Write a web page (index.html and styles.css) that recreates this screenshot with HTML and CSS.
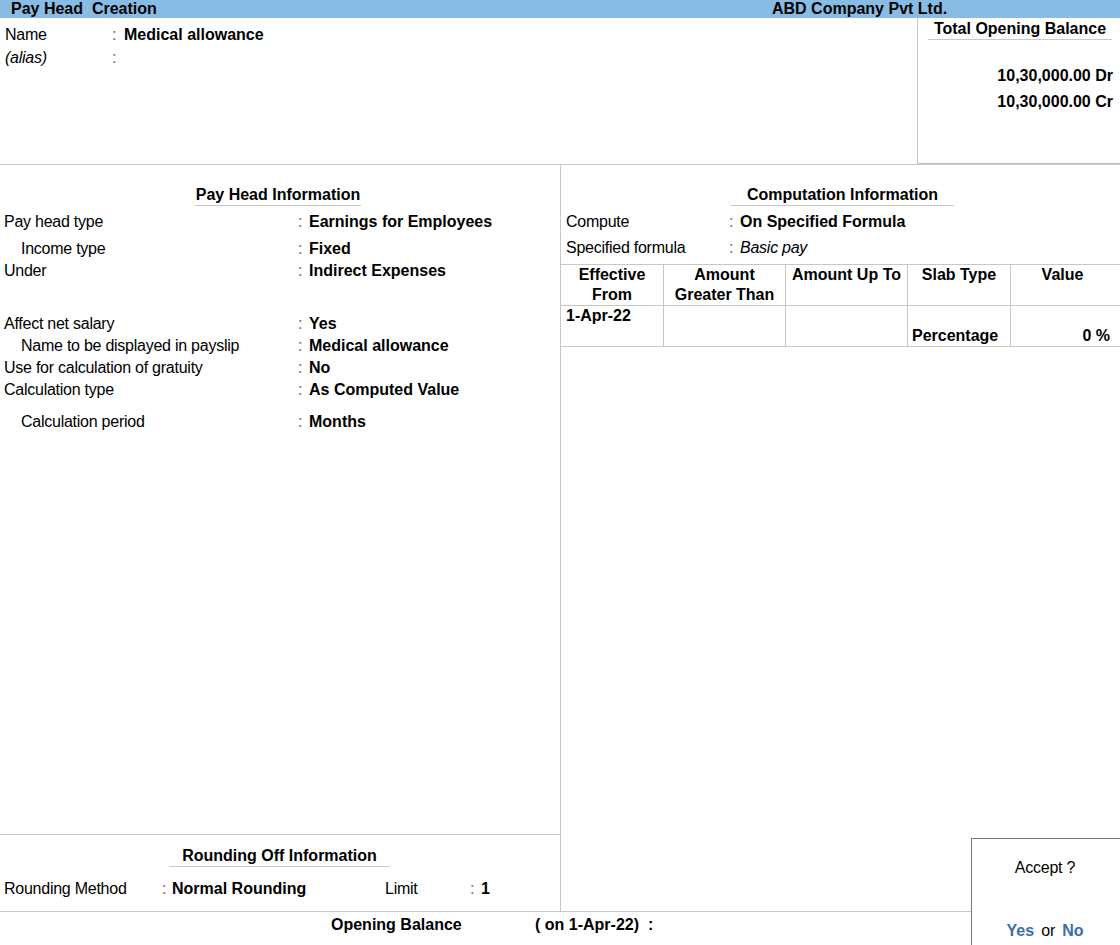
FILE: index.html
```html
<!DOCTYPE html>
<html>
<head>
<meta charset="utf-8">
<title>Pay Head Creation</title>
<link rel="stylesheet" href="styles.css">
</head>
<body>
<div class="titlebar">
  <div class="app">Pay Head&nbsp; Creation</div>
  <div class="company">ABD Company Pvt Ltd.</div>
</div>

<div class="top">
  <div class="top-left">
    <div class="field f-name"><span class="lbl">Name</span><span class="colon">:</span><span class="val">Medical allowance</span></div>
    <div class="field f-name alias"><span class="lbl"><i>(alias)</i></span><span class="colon">:</span><span class="val"></span></div>
  </div>
  <div class="balance-box">
    <div class="bal-title"><span>Total Opening Balance</span></div>
    <div class="bal-amt dr">10,30,000.00 Dr</div>
    <div class="bal-amt">10,30,000.00 Cr</div>
  </div>
</div>

<div class="main">
  <div class="left">
    <div class="info">
      <div class="sec-title"><span class="ul-payhead">Pay Head Information</span></div>
      <div class="field f-info first"><span class="lbl">Pay head type</span><span class="colon">:</span><span class="val">Earnings for Employees</span></div>
      <div class="field f-info indent gap5"><span class="lbl">Income type</span><span class="colon">:</span><span class="val">Fixed</span></div>
      <div class="field f-info"><span class="lbl">Under</span><span class="colon">:</span><span class="val">Indirect Expenses</span></div>
      <div class="field f-info gap31"><span class="lbl">Affect net salary</span><span class="colon">:</span><span class="val">Yes</span></div>
      <div class="field f-info indent"><span class="lbl">Name to be displayed in payslip</span><span class="colon">:</span><span class="val">Medical allowance</span></div>
      <div class="field f-info"><span class="lbl">Use for calculation of gratuity</span><span class="colon">:</span><span class="val">No</span></div>
      <div class="field f-info"><span class="lbl">Calculation type</span><span class="colon">:</span><span class="val">As Computed Value</span></div>
      <div class="field f-info indent gap10"><span class="lbl">Calculation period</span><span class="colon">:</span><span class="val">Months</span></div>
    </div>
    <div class="rounding">
      <div class="sec-title small"><span class="ul-round">Rounding Off Information</span></div>
      <div class="field f-round"><span class="lbl">Rounding Method</span><span class="colon">:</span><span class="val rm">Normal Rounding</span><span class="lbl2">Limit</span><span class="colon">:</span><span class="val">1</span></div>
    </div>
  </div>
  <div class="right">
    <div class="sec-title"><span class="ul-comp">Computation Information</span></div>
    <div class="field f-comp first"><span class="lbl">Compute</span><span class="colon">:</span><span class="val">On Specified Formula</span></div>
    <div class="field f-comp gap4"><span class="lbl">Specified formula</span><span class="colon">:</span><span class="val it">Basic pay</span></div>
    <div class="slab">
      <div class="th">Effective<br>From</div>
      <div class="th">Amount<br>Greater Than</div>
      <div class="th">Amount Up To</div>
      <div class="th">Slab Type</div>
      <div class="th last">Value</div>
      <div class="td date">1-Apr-22</div>
      <div class="td"></div>
      <div class="td"></div>
      <div class="td low">Percentage</div>
      <div class="td low num">0 %</div>
    </div>
  </div>
</div>

<div class="footer">
  <span class="ob">Opening Balance</span><span class="ob-date">( on 1-Apr-22)&nbsp; :</span>
</div>

<div class="accept">
  <div class="accept-q">Accept ?</div>
  <div class="accept-a"><span class="opt">Yes</span> or <span class="opt">No</span></div>
</div>
</body>
</html>
```

FILE: styles.css
```css
html, body {
  margin: 0;
  padding: 0;
}
body {
  width: 1120px;
  height: 945px;
  overflow: hidden;
  position: relative;
  background: #ffffff;
  color: #000000;
  font-family: "Liberation Sans", Arial, sans-serif;
  font-size: 16px;
  letter-spacing: -0.25px;
}

/* title bar */
.titlebar {
  height: 18px;
  line-height: 18px;
  background: #88bce4;
  display: flex;
  font-weight: bold;
  letter-spacing: 0;
}
.titlebar .app {
  width: 761px;
  padding-left: 11px;
}

/* top area */
.top {
  display: flex;
  height: 146px;
  border-bottom: 1px solid #c8c8c8;
}
.top-left {
  flex: 1;
  padding-top: 6px;
}
.balance-box {
  width: 203px;
  height: 146px;
  box-sizing: border-box;
  border-left: 1px solid #c8c8c8;
  border-bottom: 1px solid #bdbdbd;
}
.bal-title {
  text-align: center;
  font-weight: bold;
  letter-spacing: 0;
  line-height: 20px;
  padding-top: 1px;
  padding-left: 2px;
}
.bal-title span {
  display: inline-block;
  padding: 0 6px;
  border-bottom: 1px solid #c8c8c8;
}
.bal-amt {
  text-align: right;
  font-weight: bold;
  letter-spacing: 0;
  line-height: 22px;
  padding-right: 7px;
  margin-top: 4px;
}
.bal-amt.dr {
  margin-top: 25px;
}

/* generic field rows */
.field {
  display: flex;
  height: 22px;
  line-height: 22px;
  white-space: nowrap;
}
.field .colon {
  color: #666;
}
.field .val {
  font-weight: bold;
  letter-spacing: 0;
}
.field .val.it {
  font-weight: normal;
  font-style: italic;
  letter-spacing: -0.25px;
}

.f-name {
  padding-left: 5px;
}
.f-name .lbl { width: 107px; }
.f-name .colon { width: 12px; }
.f-name.alias { margin-top: 1px; }

/* main area */
.main {
  display: flex;
  height: 746px;
  border-bottom: 1px solid #c8c8c8;
}
.left {
  width: 561px;
  box-sizing: border-box;
  border-right: 1px solid #c8c8c8;
  display: flex;
  flex-direction: column;
}
.info {
  flex: 1;
}
.right {
  flex: 1;
}

.sec-title {
  text-align: center;
  padding-top: 18px;
  font-weight: bold;
  letter-spacing: 0;
}
.sec-title span {
  display: inline-block;
  height: 22px;
  line-height: 24px;
  border-bottom: 1px solid #c8c8c8;
}
.ul-payhead { padding: 0 1px; margin-right: 4px; }
.ul-comp { padding: 0 16px; margin-left: 4px; }
.ul-round { padding: 0 13px; margin-right: 1px; }
.sec-title.small { padding-top: 9px; }

.f-info {
  padding-left: 4px;
}
.f-info .lbl { width: 294px; box-sizing: border-box; }
.f-info .colon { width: 11px; }
.f-info.indent .lbl { padding-left: 17px; }
.first { margin-top: 5px; }
.gap4 { margin-top: 4px; }
.gap5 { margin-top: 5px; }
.gap10 { margin-top: 10px; }
.gap31 { margin-top: 31px; }

.f-comp {
  padding-left: 5px;
}
.f-comp .lbl { width: 163px; }
.f-comp .colon { width: 11px; }

/* slab table */
.slab {
  margin-top: 5px;
  display: grid;
  grid-template-columns: 102px 122px 122px 103px 110px;
  grid-template-rows: 41px 41px;
  border-top: 1px solid #c8c8c8;
  font-weight: bold;
  letter-spacing: 0;
  line-height: 20px;
}
.slab > div {
  border-bottom: 1px solid #c8c8c8;
  border-left: 1px solid #c8c8c8;
  box-sizing: border-box;
}
.slab > div:nth-child(5n+1) {
  border-left: none;
}
.th {
  text-align: center;
}
.th.last {
  padding-right: 6px;
}
.td.date {
  padding-left: 5px;
}
.td.low {
  padding-top: 20px;
  padding-left: 4px;
}
.td.num {
  text-align: right;
  padding-right: 10px;
}

/* rounding */
.rounding {
  height: 77px;
  box-sizing: border-box;
  border-top: 1px solid #c8c8c8;
}
.f-round {
  margin-top: 11px;
  padding-left: 4px;
}
.f-round .lbl { width: 158px; }
.f-round .colon { width: 10px; }
.f-round .rm { width: 213px; }
.f-round .lbl2 { width: 85px; }
.f-round .lbl2 + .colon { width: 11px; }

/* footer */
.footer {
  padding-top: 2px;
  padding-left: 331px;
  line-height: 22px;
  font-weight: bold;
  letter-spacing: 0;
  display: flex;
}
.footer .ob {
  width: 204px;
}

/* accept dialog */
.accept {
  position: absolute;
  left: 971px;
  top: 838px;
  width: 150px;
  height: 120px;
  box-sizing: border-box;
  background: #ffffff;
  border: 1px solid #777777;
  text-align: center;
  line-height: 22px;
}
.accept-q {
  margin-top: 18px;
  padding-right: 2px;
}
.accept-a {
  margin-top: 41px;
  padding-right: 2px;
  word-spacing: 3px;
}
.accept-a .opt {
  color: #3b6ea8;
  font-weight: bold;
  letter-spacing: 0;
}
```
